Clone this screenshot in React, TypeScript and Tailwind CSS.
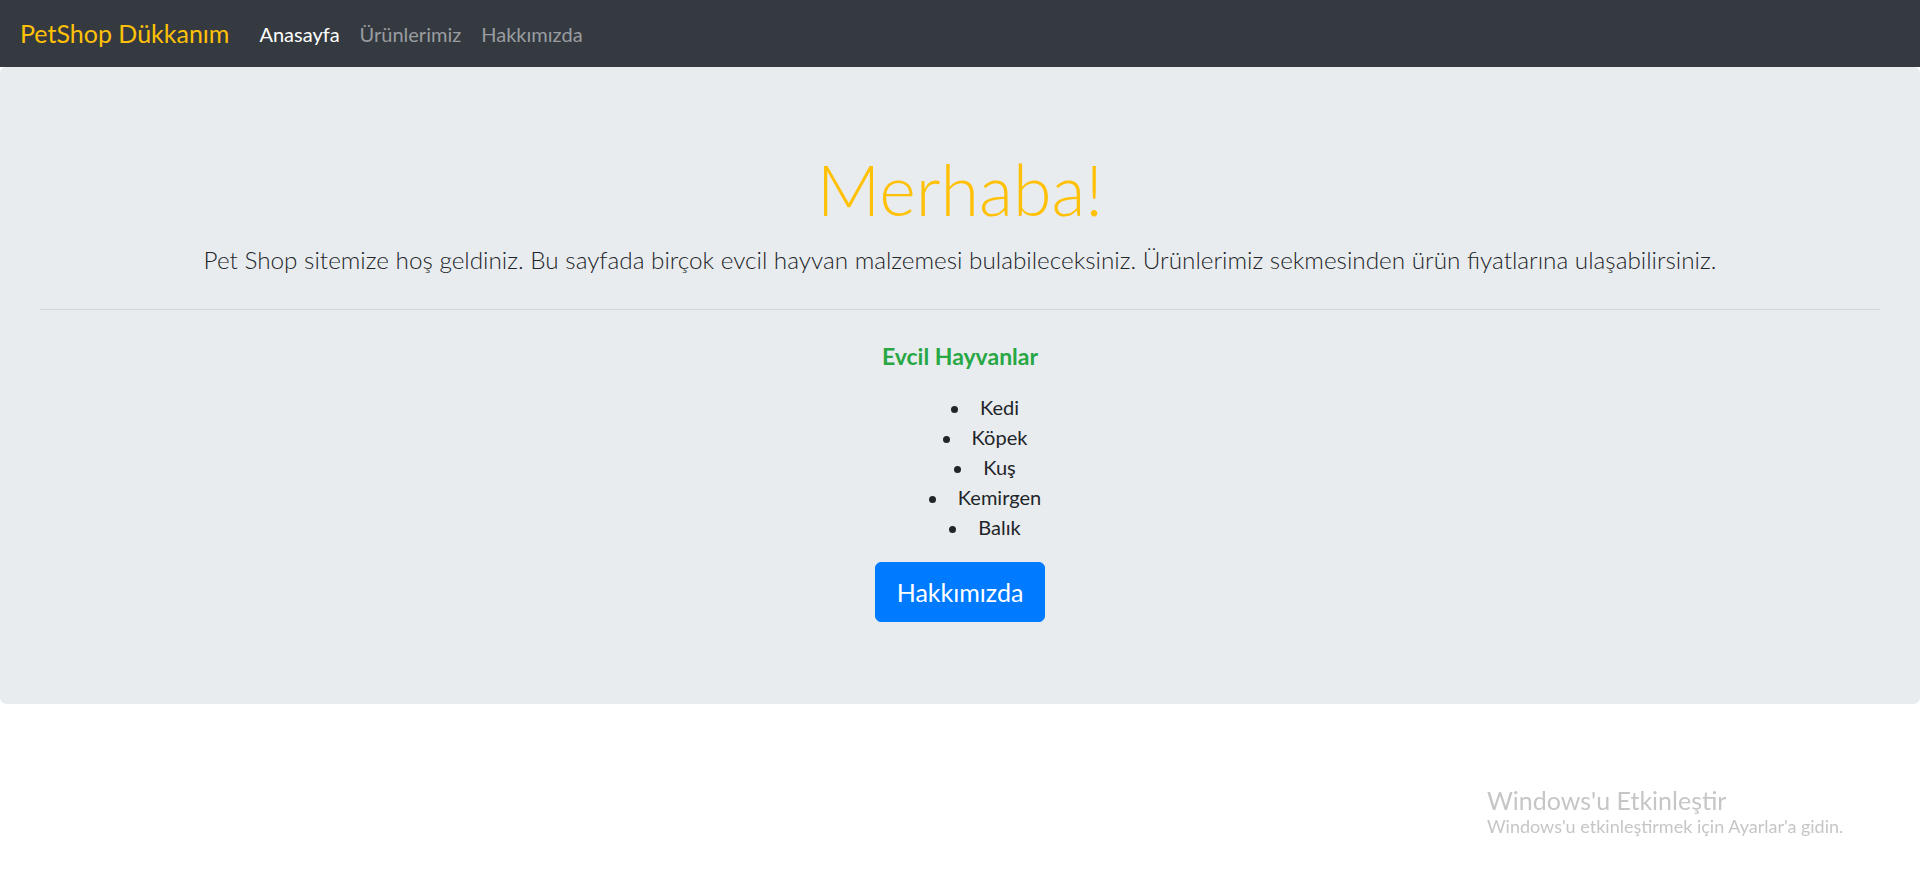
import { FC } from "react";

const pets = ["Kedi", "Köpek", "Kuş", "Kemirgen", "Balık"];

const Navbar: FC = () => {
  return (
    <nav className="flex h-[67px] items-center bg-[#343a40] px-[20px]">
      <a className="mr-[20px] text-[25px] leading-[37px] text-[#ffc107]" href="#">
        PetShop Dükkanım
      </a>
      <ul className="flex flex-row text-[20px] leading-[30px]">
        <li>
          <a className="px-[10px] text-white" href="#">
            Anasayfa
          </a>
        </li>
        <li>
          <a className="px-[10px] text-[#9a9da0]" href="#">
            Ürünlerimiz
          </a>
        </li>
        <li>
          <a className="px-[10px] text-[#9a9da0]" href="#">
            Hakkımızda
          </a>
        </li>
      </ul>
    </nav>
  );
};

const Jumbotron: FC = () => {
  return (
    <div className="mb-[40px] rounded-[6px] bg-[#e9ecef] px-[40px] pt-[80px] pb-[82px] text-center text-[#212529]">
      <h1 className="h-[84px] text-[70px] leading-[84px] font-light text-[#ffc107]">
        Merhaba!
      </h1>
      <p className="mt-[10px] text-[24.3px] leading-[37px] font-light">
        Pet Shop sitemize hoş geldiniz. Bu sayfada birçok evcil hayvan malzemesi
        bulabileceksiniz. Ürünlerimiz sekmesinden ürün fiyatlarına
        ulaşabilirsiniz.
      </p>
      <hr className="mt-[31px] border-t border-[#d3d5d7]" />
      <h5 className="mt-[31px] text-[23px] leading-[30px] font-bold text-[#28a745]">
        Evcil Hayvanlar
      </h5>
      <ul className="mt-[21px] pl-[50px] text-[20px] leading-[30px]">
        {pets.map((pet) => (
          <li key={pet}>
            <span className="inline-block w-[29px] text-left">
              <span className="inline-block h-[7px] w-[7px] rounded-full bg-[#212529] align-middle" />
            </span>
            {pet}
          </li>
        ))}
      </ul>
      <button className="mt-[20px] h-[60px] w-[170px] rounded-[6px] border border-[#007bff] bg-[#007bff] text-[25px] leading-[37px] text-white">
        Hakkımızda
      </button>
    </div>
  );
};

const Watermark: FC = () => {
  return (
    <div className="pointer-events-none fixed top-[785px] left-[1487px] text-[#c6c6c6]">
      <div className="text-[25px] leading-[30px]">Windows'u Etkinleştir</div>
      <div className="text-[18px] leading-[22px]">
        Windows'u etkinleştirmek için Ayarlar'a gidin.
      </div>
    </div>
  );
};

export default function App() {
  return (
    <div className="min-h-[873px] bg-white font-['Segoe_UI','Lato',sans-serif]">
      <Navbar />
      <Jumbotron />
      <Watermark />
    </div>
  );
}
